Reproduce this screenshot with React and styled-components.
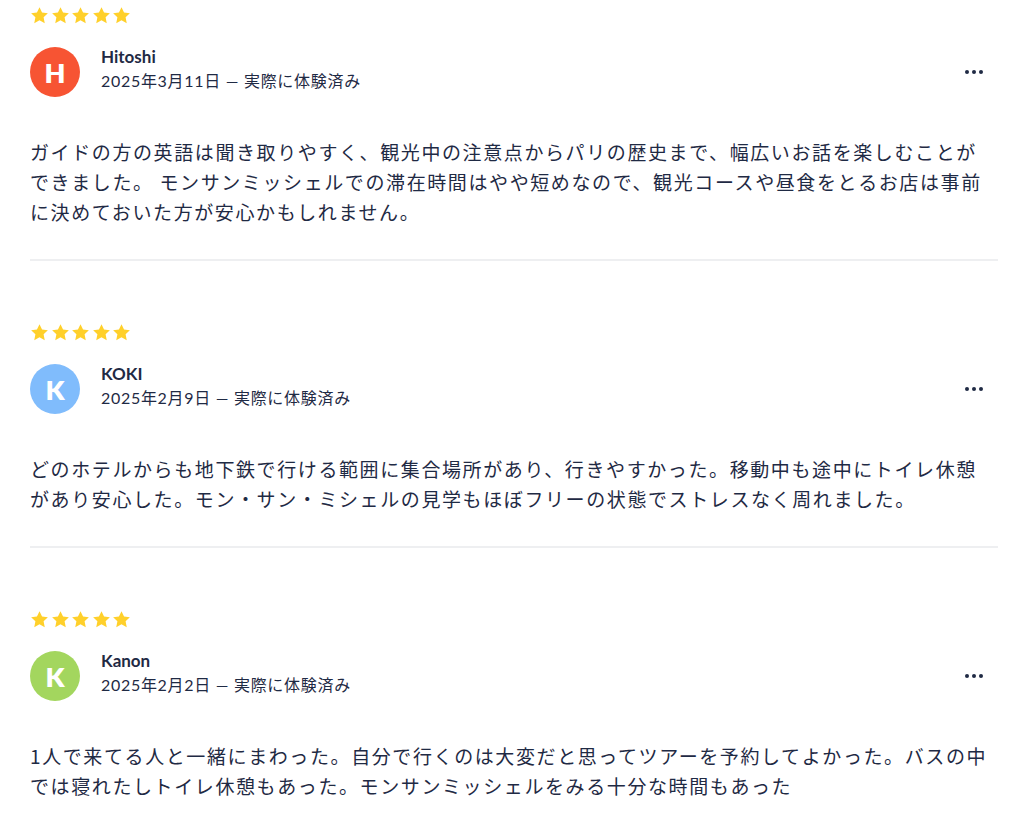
import React from "react";
import styled, { createGlobalStyle } from "styled-components";

const Global = createGlobalStyle`
  html, body { margin: 0; padding: 0; background: #ffffff; }
  body { font-family: "Lato", "Noto Sans CJK JP", sans-serif; color: #1f2a44; }
`;

const Page = styled.div`
  padding: 7px 26px 0 30px;
`;

const Review = styled.article`
  padding-top: ${(p) => (p.$first ? "0" : "63px")};
`;

const Stars = styled.div`
  display: flex;
  gap: 3.5px;
  height: 17px;
  margin-left: 1px;
`;

const Header = styled.div`
  display: flex;
  align-items: flex-start;
  margin-top: 23px;
`;

const Avatar = styled.div`
  width: 50px;
  height: 50px;
  border-radius: 50%;
  background: ${(p) => p.$color};
  color: #fff;
  display: flex;
  align-items: center;
  justify-content: center;
  font-family: "Lato", sans-serif;
  font-weight: 800;
  font-size: 27px;
  flex-shrink: 0;
`;

const Info = styled.div`
  margin-left: 21px;
  margin-top: -1px;
  display: flex;
  flex-direction: column;
  flex: 1;
`;

const Name = styled.div`
  font-size: 17px;
  font-weight: 700;
  line-height: 22px;
  color: #1f2a44;
`;

const Meta = styled.div`
  font-family: "Lato", "Noto Sans CJK JP", sans-serif;
  font-size: 16px;
  line-height: 26px;
  color: #1f2a44;
  letter-spacing: 0.7px;
`;

const MoreButton = styled.button`
  border: 0;
  background: transparent;
  width: 32px;
  height: 32px;
  margin-top: 9px;
  margin-right: 8px;
  padding: 0;
  display: flex;
  align-items: center;
  justify-content: center;
  cursor: pointer;
`;

const Body = styled.p`
  margin: 40px 0 0 0;
  max-width: 962px;
  font-family: "Noto Sans CJK JP", sans-serif;
  font-size: 19px;
  line-height: 30px;
  letter-spacing: 1.6px;
  color: #1f2a44;
`;

const Divider = styled.hr`
  margin: 32px 0 0 0;
  border: 0;
  height: 2px;
  background: #eeeff1;
`;

const Star = () => (
  <svg width="17" height="17" viewBox="0 0 24 24">
    <path
      fill="#ffd02b"
      d="M12 0.3l3.6 7.6 8.2 1-6 5.7 1.6 8.2L12 18.7l-7.4 4.1 1.6-8.2-6-5.7 8.2-1z"
    />
  </svg>
);

const Dots = () => (
  <svg width="18" height="4" viewBox="0 0 18 4">
    <circle cx="2" cy="2" r="2" fill="#1f2a44" />
    <circle cx="9" cy="2" r="2" fill="#1f2a44" />
    <circle cx="16" cy="2" r="2" fill="#1f2a44" />
  </svg>
);

const reviews = [
  {
    initial: "H",
    color: "#f75433",
    name: "Hitoshi",
    date: "2025年3月11日",
    text:
      "ガイドの方の英語は聞き取りやすく、観光中の注意点からパリの歴史まで、幅広いお話を楽しむことができました。 モンサンミッシェルでの滞在時間はやや短めなので、観光コースや昼食をとるお店は事前に決めておいた方が安心かもしれません。",
  },
  {
    initial: "K",
    color: "#80bcfc",
    name: "KOKI",
    date: "2025年2月9日",
    text:
      "どのホテルからも地下鉄で行ける範囲に集合場所があり、行きやすかった。移動中も途中にトイレ休憩があり安心した。モン・サン・ミシェルの見学もほぼフリーの状態でストレスなく周れました。",
  },
  {
    initial: "K",
    color: "#a3d65e",
    name: "Kanon",
    date: "2025年2月2日",
    text:
      "1人で来てる人と一緒にまわった。自分で行くのは大変だと思ってツアーを予約してよかった。バスの中では寝れたしトイレ休憩もあった。モンサンミッシェルをみる十分な時間もあった",
  },
];

export default function App() {
  return (
    <>
      <Global />
      <Page>
        {reviews.map((r, i) => (
          <Review key={i} $first={i === 0}>
            <Stars>
              {[0, 1, 2, 3, 4].map((s) => (
                <Star key={s} />
              ))}
            </Stars>
            <Header>
              <Avatar $color={r.color}>{r.initial}</Avatar>
              <Info>
                <Name>{r.name}</Name>
                <Meta>{r.date} — 実際に体験済み</Meta>
              </Info>
              <MoreButton aria-label="more">
                <Dots />
              </MoreButton>
            </Header>
            <Body>{r.text}</Body>
            {i < reviews.length - 1 && <Divider />}
          </Review>
        ))}
      </Page>
    </>
  );
}
